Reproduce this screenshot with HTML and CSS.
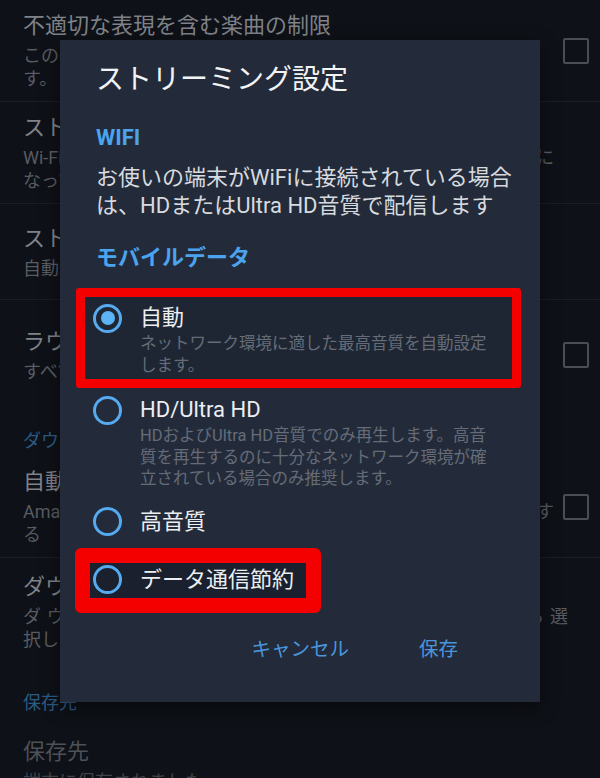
FILE: index.html
```html
<!DOCTYPE html>
<html lang="ja">
<head>
<meta charset="utf-8">
<title>ストリーミング設定</title>
<link rel="stylesheet" href="styles.css">
</head>
<body>
<div class="settings">
  <div class="row">
    <div class="text">
      <div class="title">不適切な表現を含む楽曲の制限</div>
      <div class="sub">このデバイスでは不適切な表現を含む楽曲の再生を制限しま<br>す。</div>
    </div>
    <span class="check"></span>
  </div>
  <div class="row row--mid">
    <div class="text">
      <div class="title">ストリーミング音質</div>
      <div class="sub"><span class="just">Wi-Fi接続時は高音質でストリーミング再生されるように</span>なっています。</div>
    </div>
  </div>
  <div class="row">
    <div class="text">
      <div class="title">ストリーミング設定</div>
      <div class="sub">自動</div>
    </div>
  </div>
  <div class="row row--tall row--nb">
    <div class="text">
      <div class="title">ラウドネスノーマライゼーション</div>
      <div class="sub">すべての楽曲の音量を均一にします</div>
    </div>
    <span class="check"></span>
  </div>
  <div class="section">ダウンロード</div>
  <div class="row">
    <div class="text">
      <div class="title">自動ダウンロード</div>
      <div class="sub"><span class="just">Amazon Musicライブラリの楽曲を自動的にダウンロードす</span>る</div>
    </div>
    <span class="check"></span>
  </div>
  <div class="row row--wide row--p14 row--nb">
    <div class="text">
      <div class="title">ダウンロード音質</div>
      <div class="sub"><span class="just">ダウンロードする楽曲の音質をHDまたは標準から選</span>択してください。</div>
    </div>
  </div>
  <div class="section section--2">保存先</div>
  <div class="row row--nb row--dim">
    <div class="text">
      <div class="title">保存先</div>
      <div class="sub">端末に保存されました</div>
    </div>
  </div>
</div>

<div class="dialog">
  <h1 class="dialog-title">ストリーミング設定</h1>
  <div class="heading">WIFI</div>
  <p class="desc">お使いの端末がWiFiに接続されている場合<br>は、HDまたはUltra HD音質で配信します</p>
  <div class="heading heading--mobile">モバイルデータ</div>

  <div class="mark mark--a">
    <div class="opt">
      <span class="radio radio--on"></span>
      <div class="opt-body">
        <div class="opt-title">自動</div>
        <div class="opt-desc">ネットワーク環境に適した最高音質を自動設定<br>します。</div>
      </div>
    </div>
  </div>

  <div class="opt opt--plain opt--hd">
    <span class="radio"></span>
    <div class="opt-body">
      <div class="opt-title">HD/Ultra HD</div>
      <div class="opt-desc opt-desc--tight">HDおよびUltra HD音質でのみ再生します。高音<br>質を再生するのに十分なネットワーク環境が確<br>立されている場合のみ推奨します。</div>
    </div>
  </div>

  <div class="opt opt--plain opt--hq">
    <span class="radio"></span>
    <div class="opt-body">
      <div class="opt-title">高音質</div>
    </div>
  </div>

  <div class="mark mark--b">
    <div class="opt">
      <span class="radio"></span>
      <div class="opt-body">
        <div class="opt-title">データ通信節約</div>
      </div>
    </div>
  </div>

  <div class="actions">
    <span class="btn">キャンセル</span>
    <span class="btn">保存</span>
  </div>
</div>
</body>
</html>
```

FILE: styles.css
```css
* { box-sizing: border-box; }
html, body { margin: 0; padding: 0; }
body {
  width: 600px;
  height: 778px;
  overflow: hidden;
  position: relative;
  background: #0e1117;
  font-family: Roboto, "Noto Sans CJK JP", sans-serif;
}

/* background settings list */
.row {
  display: flex;
  align-items: center;
  min-height: 96px;
  padding: 11px 11px 11px 23px;
  border-bottom: 1px solid #1b1e25;
}
.row--nb { border-bottom: none; }
.row--tall { min-height: 109px; }
.row--mid { padding-right: 46px; }
.row--wide { padding-right: 32px; }
.row--p14 { padding-top: 14px; padding-bottom: 14px; }
.text { flex: 1; min-width: 0; }
.title {
  font-size: 22px;
  line-height: 30px;
  color: #7f8288;
  white-space: nowrap;
}
.sub {
  margin-top: 3px;
  font-size: 18px;
  line-height: 23px;
  color: #585c63;
}
.row--dim .title { color: #4d5056; }
.row--dim .sub { color: #3f4248; }
.just {
  display: block;
  text-align: justify;
  text-align-last: justify;
}
.check {
  flex: none;
  width: 26px;
  height: 26px;
  margin-left: 9px;
  border: 2.5px solid #4a4d53;
  border-radius: 2px;
}
.section {
  padding: 21px 23px 4px;
  font-size: 18px;
  line-height: 22px;
  color: #2b5b83;
}
.section--2 { padding-top: 27px; padding-bottom: 3px; }

/* dialog */
.dialog {
  position: absolute;
  left: 60px;
  top: 40px;
  width: 480px;
  height: 662px;
  padding-top: 22px;
  background: #232b3a;
  box-shadow: 0 6px 18px rgba(0, 0, 0, 0.45);
}
.dialog-title {
  margin: 0 36px;
  font-size: 28px;
  line-height: 36px;
  font-weight: 400;
  color: #f2f3f5;
}
.heading {
  margin: 26px 36px 0;
  font-size: 22px;
  line-height: 28px;
  font-weight: 700;
  color: #4ba4ee;
}
.heading--mobile { margin-top: 25px; }
.desc {
  margin: 12px 16px 0 36px;
  font-size: 22px;
  line-height: 27.5px;
  color: #d7dadf;
  white-space: nowrap;
}

.opt {
  display: flex;
  align-items: flex-start;
}
.opt--plain { margin-left: 33px; }
.opt--hd { margin-top: 7px; }
.opt--hq { margin-top: 17px; }
.radio {
  flex: none;
  width: 29px;
  height: 29px;
  margin-top: 0.5px;
  border: 3px solid #55aaf0;
  border-radius: 50%;
  display: flex;
  align-items: center;
  justify-content: center;
}
.radio--on::after {
  content: "";
  width: 14px;
  height: 14px;
  border-radius: 50%;
  background: #5cb2f5;
}
.opt-body { margin-left: 18px; }
.opt-title {
  font-size: 22px;
  line-height: 30px;
  color: #eceef1;
  white-space: nowrap;
}
.opt-desc {
  font-size: 16.5px;
  line-height: 22px;
  color: #656c78;
  white-space: nowrap;
}
.opt-desc--tight { line-height: 21.6px; }

/* red annotation frames */
.mark {
  border-style: solid;
  border-color: #f40000;
}
.mark--a {
  margin: 16px 19px 0 16px;
  border-width: 9px;
  border-radius: 3px;
  padding: 6px 0 2px 8px;
  background: #1f2633;
}
.mark--b {
  display: inline-block;
  margin: 11px 0 0 15px;
  border-width: 15px;
  border-radius: 6px;
  padding: 2px 12px 3px 3px;
  background: #1a202d;
}

.actions {
  display: flex;
  justify-content: flex-end;
  gap: 70px;
  margin-top: 23px;
  padding-right: 82px;
}
.btn {
  font-size: 19.5px;
  line-height: 28px;
  color: #4a96dc;
}
```
